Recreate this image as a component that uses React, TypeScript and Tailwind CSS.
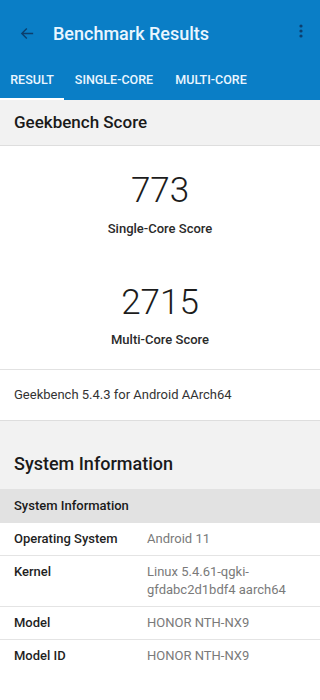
import React from 'react';

const rows = [
  { label: 'Operating System', value: 'Android 11' },
  { label: 'Kernel', value: 'Linux 5.4.61-qgki-gfdabc2d1bdf4 aarch64' },
  { label: 'Model', value: 'HONOR NTH-NX9' },
  { label: 'Model ID', value: 'HONOR NTH-NX9' },
];

export default function App() {
  return (
    <div className="w-[320px] h-[700px] bg-white overflow-hidden font-['Roboto','Liberation_Sans',sans-serif]">
      {/* app bar + tabs */}
      <div className="bg-[#0a7ec6]">
        <div className="h-[66px] flex items-center">
          <div className="w-[50px] flex justify-center pl-1">
            <svg className="w-[17px] h-[17px]" viewBox="0 0 24 24" fill="none" stroke="#0c3f6e" strokeWidth={2}>
              <path d="M20 12H5M11 5l-7 7 7 7" />
            </svg>
          </div>
          <h1 className="flex-1 pl-[3px] text-[18px] font-medium text-[#eaf6ff]">Benchmark Results</h1>
          <div className="w-[38px] flex justify-center -mt-1">
            <svg className="w-[4px] h-[14px]" viewBox="0 0 4 14" fill="#0c3f6e">
              <circle cx="2" cy="2" r="1.6" />
              <circle cx="2" cy="7" r="1.6" />
              <circle cx="2" cy="12" r="1.6" />
            </svg>
          </div>
        </div>
        <div className="flex h-[34px] text-[12.5px] font-medium text-[#eaf6ff]">
          <div className="w-[64px] flex items-center justify-center border-b-[2px] border-white pb-[3px]">RESULT</div>
          <div className="w-[100px] flex items-center justify-center pb-[5px]">SINGLE-CORE</div>
          <div className="w-[94px] flex items-center justify-center pb-[5px]">MULTI-CORE</div>
        </div>
      </div>

      {/* Geekbench score */}
      <div className="h-[46px] bg-[#f2f2f2] border-b border-[#dedede] flex items-center px-[14px]">
        <h2 className="text-[17px] font-medium text-[#1a1a1a]">Geekbench Score</h2>
      </div>
      <div className="h-[223px] flex flex-col items-center text-[#1c1c1c]">
        <div className="mt-[23px] text-[35px] font-light leading-[44px]">773</div>
        <div className="mt-[6px] text-[13px] font-medium text-[#2a2a2a]">Single-Core Score</div>
        <div className="mt-[42px] text-[35px] font-light leading-[44px]">2715</div>
        <div className="mt-[5px] text-[13px] font-medium text-[#2a2a2a]">Multi-Core Score</div>
      </div>
      <div className="h-[51px] border-t border-[#e2e2e2] flex items-center px-[14px] text-[13px] text-[#333]">
        Geekbench 5.4.3 for Android AArch64
      </div>

      {/* System information */}
      <div className="h-[69px] bg-[#f2f2f2] border-t border-[#dedede] flex items-end px-[14px] pb-[12px]">
        <h2 className="text-[18px] font-medium text-[#1a1a1a]">System Information</h2>
      </div>
      <div className="h-[34px] bg-[#e2e2e2] flex items-center px-[14px] text-[13px] font-medium text-[#1a1a1a]">
        System Information
      </div>
      {rows.map((r, i) => (
        <div
          key={r.label}
          className={`flex px-[14px] py-[7px] text-[13px] leading-[18px] ${i < rows.length - 1 ? 'border-b border-[#e4e4e4]' : ''}`}
        >
          <div className="w-[133px] shrink-0 font-medium text-[#1f1f1f]">{r.label}</div>
          <div className="flex-1 text-[#7a7a7a] pr-4">{r.value}</div>
        </div>
      ))}
    </div>
  );
}
